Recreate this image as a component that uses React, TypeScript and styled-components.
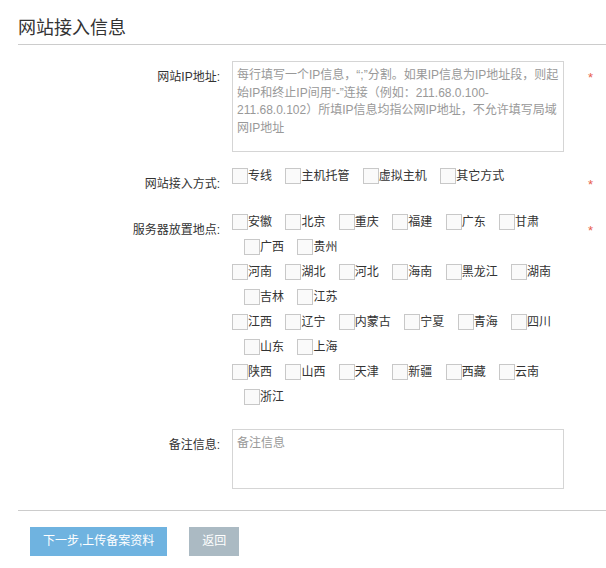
import React from "react";
import styled, { createGlobalStyle } from "styled-components";

const GlobalStyle = createGlobalStyle`
  body {
    margin: 0;
    background: #ffffff;
    font-family: "Liberation Sans", "Noto Sans CJK SC", sans-serif;
    color: #333333;
  }
`;

const Page = styled.div`
  width: 606px;
`;

const Header = styled.h3`
  margin: 0 0 0 18px;
  padding: 16px 0 4px;
  font-size: 18px;
  font-weight: normal;
  line-height: 24px;
  color: #333333;
  border-bottom: 1px solid #cccccc;
`;

const Form = styled.form`
  padding-top: 16px;
`;

const Row = styled.div<{ $space: number }>`
  display: grid;
  grid-template-columns: 220px 332px 1fr;
  column-gap: 12px;
  align-items: start;
  margin-bottom: ${(p) => p.$space}px;
`;

const Label = styled.label`
  padding-top: 7px;
  font-size: 12px;
  line-height: 18px;
  text-align: right;
  color: #333333;
`;

const Required = styled.span`
  padding: 8px 0 0 12px;
  font-size: 13px;
  line-height: 18px;
  color: #e8604c;
`;

const TextArea = styled.textarea<{ $height: number }>`
  box-sizing: border-box;
  display: block;
  width: 332px;
  height: ${(p) => p.$height}px;
  margin: 0;
  padding: 5px 2px 5px 4px;
  border: 1px solid #d5d5d5;
  border-radius: 0;
  font: inherit;
  font-size: 12px;
  line-height: 17.5px;
  color: #333333;
  resize: none;
  outline: none;

  &::placeholder {
    color: #999999;
  }
`;

const Choices = styled.div`
  display: flex;
  flex-direction: column;
  gap: 9px;
`;

const CheckLine = styled.div<{ $indent?: boolean }>`
  display: flex;
  align-items: center;
  height: 16px;
  padding-left: ${(p) => (p.$indent ? 12 : 0)}px;
`;

const Option = styled.label`
  display: flex;
  align-items: center;
  margin-right: 13.4px;
  font-size: 12px;
  line-height: 16px;
  color: #333333;
  white-space: nowrap;
`;

const Box = styled.input`
  appearance: none;
  box-sizing: border-box;
  width: 16px;
  height: 16px;
  margin: 0;
  border: 1px solid #c8c8c8;
  background: #fafafa;
  flex: none;
`;

const Footer = styled.div`
  display: flex;
  gap: 22px;
  margin-left: 18px;
  padding: 16px 12px 13px;
  border-top: 1px solid #cccccc;
`;

const Button = styled.button<{ $tone: "info" | "grey" }>`
  height: 29px;
  padding: 0 13px;
  border: none;
  border-radius: 0;
  background: ${(p) => (p.$tone === "info" ? "#6fb3e0" : "#abbac3")};
  color: #ffffff;
  font: inherit;
  font-size: 12px;
  line-height: 29px;
  cursor: pointer;
`;

const accessTypes = ["专线", "主机托管", "虚拟主机", "其它方式"];

const regions: string[][][] = [
  [["安徽", "北京", "重庆", "福建", "广东", "甘肃"], ["广西", "贵州"]],
  [["河南", "湖北", "河北", "海南", "黑龙江", "湖南"], ["吉林", "江苏"]],
  [["江西", "辽宁", "内蒙古", "宁夏", "青海", "四川"], ["山东", "上海"]],
  [["陕西", "山西", "天津", "新疆", "西藏", "云南"], ["浙江"]],
];

const ipHint =
  "每行填写一个IP信息，“;”分割。如果IP信息为IP地址段，则起\n" +
  "始IP和终止IP间用“-”连接（例如：211.68.0.100-\n" +
  "211.68.0.102）所填IP信息均指公网IP地址，不允许填写局域\n" +
  "网IP地址";

function Check({ text }: { text: string }) {
  return (
    <Option>
      <Box type="checkbox" />
      {text}
    </Option>
  );
}

export default function App() {
  return (
    <Page>
      <GlobalStyle />
      <Header>网站接入信息</Header>
      <Form onSubmit={(e) => e.preventDefault()}>
        <Row $space={16}>
          <Label>网站IP地址:</Label>
          <TextArea $height={91} placeholder={ipHint} />
          <Required>*</Required>
        </Row>
        <Row $space={20}>
          <Label>网站接入方式:</Label>
          <Choices>
            <CheckLine>
              {accessTypes.map((t) => (
                <Check key={t} text={t} />
              ))}
            </CheckLine>
          </Choices>
          <Required>*</Required>
        </Row>
        <Row $space={24}>
          <Label>服务器放置地点:</Label>
          <Choices>
            {regions.map((group, gi) =>
              group.map((line, li) => (
                <CheckLine key={`${gi}-${li}`} $indent={li > 0}>
                  {line.map((name) => (
                    <Check key={name} text={name} />
                  ))}
                </CheckLine>
              ))
            )}
          </Choices>
          <Required>*</Required>
        </Row>
        <Row $space={21}>
          <Label>备注信息:</Label>
          <TextArea $height={60} placeholder="备注信息" />
        </Row>
      </Form>
      <Footer>
        <Button $tone="info">下一步,上传备案资料</Button>
        <Button $tone="grey">返回</Button>
      </Footer>
    </Page>
  );
}
